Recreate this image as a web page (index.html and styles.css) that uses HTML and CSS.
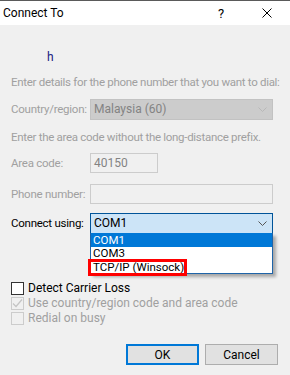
FILE: index.html
```html
<!DOCTYPE html>
<html lang="en">
<head>
    <meta charset="UTF-8">
    <title>Connect To</title>
    <link rel="stylesheet" href="styles.css">
</head>
<body>
    <div class="dialog">
        <div class="titlebar">
            <span class="title">Connect To</span>
            <span class="caption-btn">?</span>
            <span class="caption-btn">
                <svg width="10" height="10" viewBox="0 0 10 10"><path d="M0.5 0.5 L9.5 9.5 M9.5 0.5 L0.5 9.5" stroke="#000" stroke-width="1" fill="none"/></svg>
            </span>
        </div>

        <div class="content">
            <div class="entry-name">h</div>

            <p class="hint hint-first">Enter details for the phone number that you want to dial:</p>
            <div class="row row-country">
                <span class="label disabled">Country/region:</span>
                <div class="select select-disabled">
                    <span>Malaysia (60)</span>
                    <svg class="chevron" width="9" height="5" viewBox="0 0 9 5"><path d="M0.5 0.5 L4.5 4.5 L8.5 0.5" stroke="#b8b8b8" fill="none"/></svg>
                </div>
            </div>

            <p class="hint hint-second">Enter the area code without the long-distance prefix.</p>
            <div class="row row-area">
                <span class="label disabled">Area code:</span>
                <div class="field field-short">40150</div>
            </div>
            <div class="row row-phone">
                <span class="label disabled">Phone number:</span>
                <div class="field"></div>
            </div>
            <div class="row row-connect">
                <span class="label">Connect using:</span>
                <div class="select select-open">
                    <span>COM1</span>
                    <svg class="chevron" width="9" height="5" viewBox="0 0 9 5"><path d="M0.5 0.5 L4.5 4.5 L8.5 0.5" stroke="#555" fill="none"/></svg>
                    <ul class="dropdown">
                        <li class="selected">COM1</li>
                        <li>COM3</li>
                        <li class="marked">TCP/IP (Winsock)</li>
                    </ul>
                </div>
            </div>

            <div class="checks">
                <div class="check-row">
                    <span class="box"></span>
                    <span>Detect Carrier Loss</span>
                </div>
                <div class="check-row disabled">
                    <span class="box box-disabled">
                        <svg width="11" height="11" viewBox="0 0 11 11"><path d="M1 5.5 L4 8.5 L10 1.5" stroke="#c4c4c4" stroke-width="1.2" fill="none"/></svg>
                    </span>
                    <span>Use country/region code and area code</span>
                </div>
                <div class="check-row disabled">
                    <span class="box box-disabled"></span>
                    <span>Redial on busy</span>
                </div>
            </div>

            <div class="buttons">
                <button class="btn btn-default">OK</button>
                <button class="btn">Cancel</button>
            </div>
        </div>
    </div>
</body>
</html>
```

FILE: styles.css
```css
body {
    margin: 0;
    font-family: Roboto, "Noto Sans", sans-serif;
    font-size: 11.5px;
    line-height: 15px;
    color: #000;
}
.dialog {
    width: 290px;
    height: 375px;
    background-color: #f0f0f0;
    border-top: 1px solid #5a5a5a;
    box-sizing: border-box;
    overflow: hidden;
}
.titlebar {
    height: 24px;
    background-color: #fff;
    display: flex;
    align-items: center;
    font-size: 12px;
}
.title {
    flex: 1;
    padding-left: 3px;
}
.caption-btn {
    width: 46px;
    height: 24px;
    display: flex;
    align-items: center;
    justify-content: center;
    font-size: 13px;
}
.content {
    padding: 0 12px 0 11px;
}
.entry-name {
    margin-top: 25px;
    padding-left: 36px;
    color: #1a1a80;
    font-size: 12px;
}
.hint {
    margin: 0;
    color: #a0a0a0;
    white-space: nowrap;
    letter-spacing: -0.3px;
}
.hint-first {
    margin-top: 10px;
}
.hint-second {
    margin-top: 10px;
}
.disabled {
    color: #a0a0a0;
}
.row {
    display: flex;
    align-items: center;
}
.row-country {
    margin-top: 9px;
}
.row-area {
    margin-top: 8px;
}
.row-phone {
    margin-top: 11px;
}
.row-connect {
    margin-top: 9px;
}
.label {
    width: 79px;
    flex-shrink: 0;
    white-space: nowrap;
    letter-spacing: -0.25px;
}
.select {
    position: relative;
    width: 183px;
    height: 21px;
    box-sizing: border-box;
    display: flex;
    align-items: center;
    justify-content: space-between;
    padding: 0 5px 0 3px;
    font-size: 12px;
}
.select-disabled {
    background-color: #cccccc;
    border: 1px solid #c2c2c2;
    color: #838383;
}
.select-open {
    background-color: #cce4f7;
    border: 1px solid #005499;
}
.field {
    width: 183px;
    height: 20px;
    box-sizing: border-box;
    border: 1px solid #cccccc;
    padding: 0 3px;
    display: flex;
    align-items: center;
    color: #838383;
    font-size: 12px;
}
.field-short {
    width: 68px;
}
.dropdown {
    position: absolute;
    top: 100%;
    left: -1px;
    width: 183px;
    box-sizing: border-box;
    margin: 0;
    padding: 0;
    list-style: none;
    background-color: #fff;
    border: 1px solid #1f64a8;
    border-top: none;
    box-shadow: 3px 3px 3px rgba(0, 0, 0, 0.3);
    z-index: 1;
    font-size: 11.5px;
}
.dropdown li {
    position: relative;
    height: 13px;
    line-height: 13px;
    padding-left: 2px;
}
.dropdown li.selected {
    height: 14px;
    line-height: 14px;
    background-color: #0078d7;
    color: #fff;
}
.dropdown li.marked {
    line-height: 15px;
}
.marked::after {
    content: "";
    position: absolute;
    left: -3px;
    top: -1px;
    width: 99px;
    height: 17px;
    box-sizing: border-box;
    border: 3px solid #ff0000;
}
.checks {
    margin-top: 47px;
}
.check-row {
    display: flex;
    align-items: center;
    height: 15px;
    font-size: 12px;
}
.box {
    width: 13px;
    height: 13px;
    box-sizing: border-box;
    border: 1px solid #333;
    background-color: #fff;
    margin-right: 4px;
    display: flex;
    align-items: center;
    justify-content: center;
}
.box-disabled {
    border-color: #cccccc;
    background-color: #f0f0f0;
}
.buttons {
    margin-top: 18px;
    display: flex;
    justify-content: flex-end;
    gap: 6px;
}
.btn {
    width: 73px;
    height: 21px;
    box-sizing: border-box;
    background-color: #e1e1e1;
    border: 1px solid #adadad;
    border-radius: 0;
    font-family: Roboto, "Noto Sans", sans-serif;
    font-size: 12px;
    padding: 0;
    color: #000;
}
.btn-default {
    border: 2px solid #0078d7;
}
```
